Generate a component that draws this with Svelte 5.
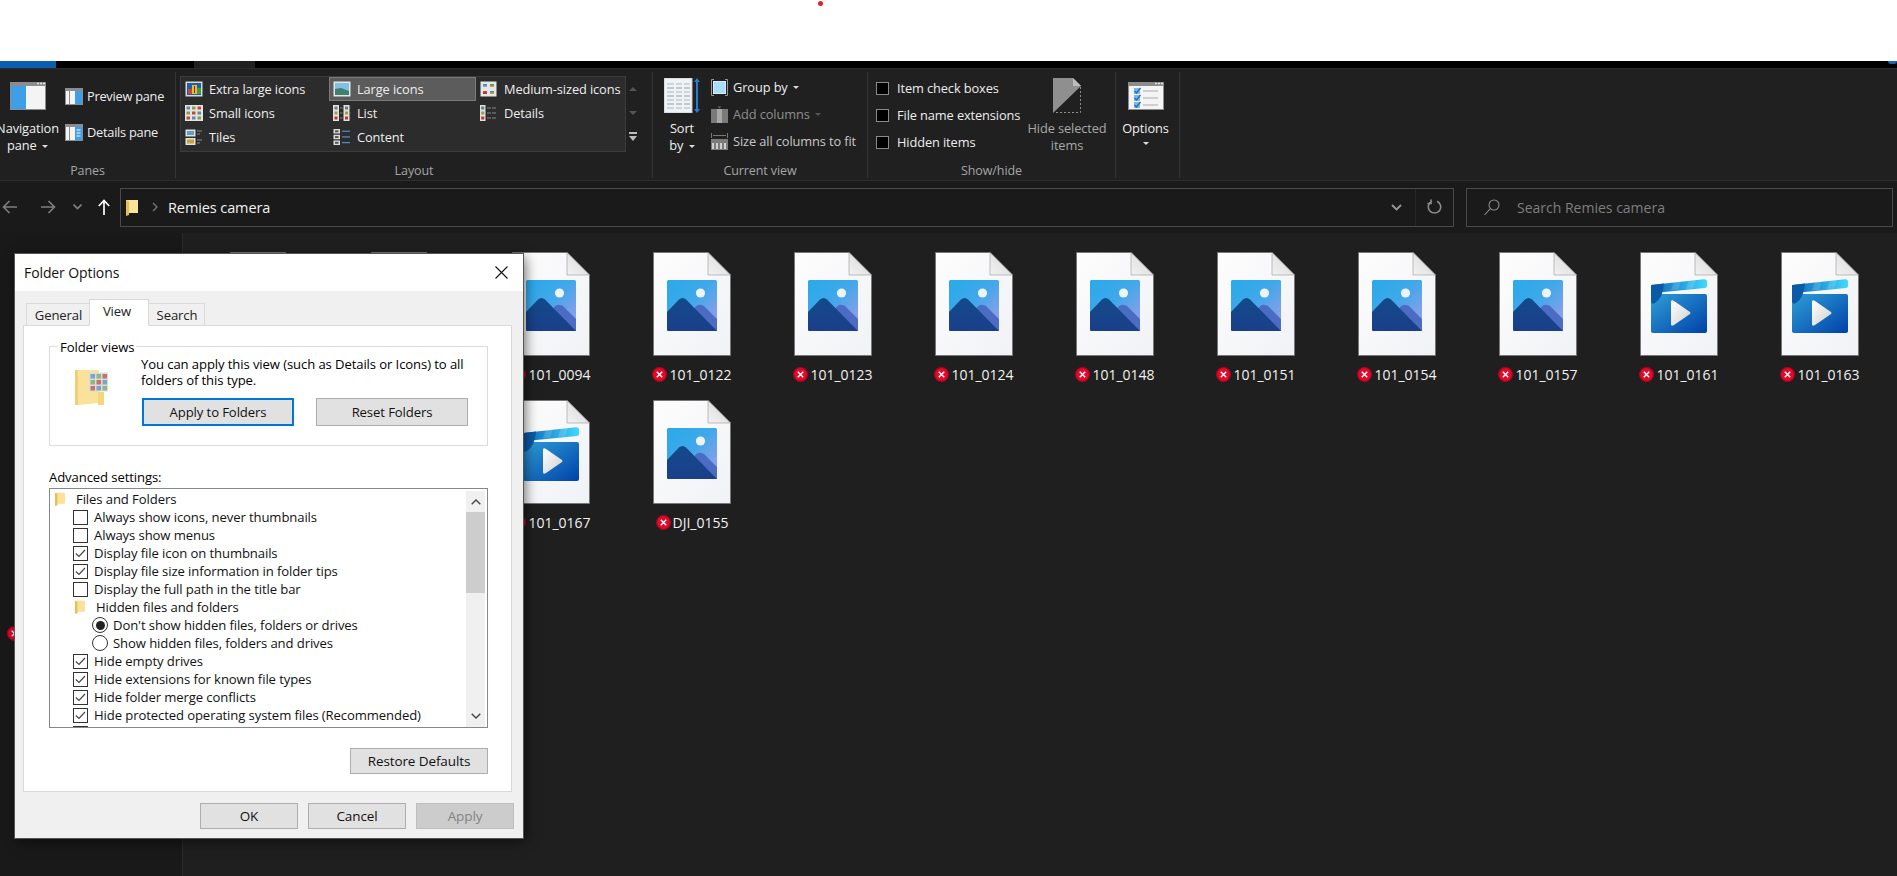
<script lang="ts">
	const layouts = [
		{ label: 'Extra large icons', icon: 'xl' },
		{ label: 'Large icons', icon: 'lg', active: true },
		{ label: 'Medium-sized icons', icon: 'md' },
		{ label: 'Small icons', icon: 'sm' },
		{ label: 'List', icon: 'list' },
		{ label: 'Details', icon: 'details' },
		{ label: 'Tiles', icon: 'tiles' },
		{ label: 'Content', icon: 'content' }
	];

	// the first cells of each row sit behind the dialog, only their top edge shows
	const files = [
		{ name: '', kind: 'image' },
		{ name: '', kind: 'image' },
		{ name: '101_0094', kind: 'image' },
		{ name: '101_0122', kind: 'image' },
		{ name: '101_0123', kind: 'image' },
		{ name: '101_0124', kind: 'image' },
		{ name: '101_0148', kind: 'image' },
		{ name: '101_0151', kind: 'image' },
		{ name: '101_0154', kind: 'image' },
		{ name: '101_0157', kind: 'image' },
		{ name: '101_0161', kind: 'video' },
		{ name: '101_0163', kind: 'video' },
		{ name: '', kind: 'video' },
		{ name: '', kind: 'video' },
		{ name: '101_0167', kind: 'video' },
		{ name: 'DJI_0155', kind: 'image' }
	];

	const settings = [
		{ type: 'folder', label: 'Files and Folders', level: 0 },
		{ type: 'check', label: 'Always show icons, never thumbnails' },
		{ type: 'check', label: 'Always show menus' },
		{ type: 'check', label: 'Display file icon on thumbnails', on: true },
		{ type: 'check', label: 'Display file size information in folder tips', on: true },
		{ type: 'check', label: 'Display the full path in the title bar' },
		{ type: 'folder', label: 'Hidden files and folders', level: 1 },
		{ type: 'radio', label: "Don't show hidden files, folders or drives", on: true },
		{ type: 'radio', label: 'Show hidden files, folders and drives' },
		{ type: 'check', label: 'Hide empty drives', on: true },
		{ type: 'check', label: 'Hide extensions for known file types', on: true },
		{ type: 'check', label: 'Hide folder merge conflicts', on: true },
		{ type: 'check', label: 'Hide protected operating system files (Recommended)', on: true },
		{ type: 'check', label: '', on: true }
	];
</script>

{#snippet tinyPhoto(x, y, w, h, a = '#3f87b5', b = '#c9a13b')}
	<rect {x} {y} width={w} height={h} fill="#e8e8e8" />
	<rect x={x + 1} y={y + 1} width={w - 2} height={h - 2} fill={a} />
	<rect x={x + 1} y={y + h / 2} width={w - 2} height={h / 2 - 1} fill={b} />
{/snippet}

{#snippet galleryIcon(name)}
	<svg class="gallery-icon" width="18" height="16" viewBox="0 0 18 16">
		{#if name === 'xl'}
			<rect x="0.5" y="0.5" width="17" height="15" fill="#d8d8d8" />
			<rect x="2" y="2" width="14" height="12" fill="#1e5fa8" />
			<rect x="3" y="8" width="4" height="5" fill="#c9453a" />
			<rect x="7" y="4" width="5" height="9" fill="#e8c021" />
			<rect x="9" y="5" width="1" height="7" fill="#7a2b10" />
			<rect x="12" y="7" width="4" height="6" fill="#3f9a4c" />
		{:else if name === 'lg'}
			<rect x="0.5" y="0.5" width="17" height="15" fill="#e6e6e6" />
			<rect x="2" y="2" width="14" height="12" fill="#7fc0e4" />
			<path d="M2 8 L8 7 L16 10 V14 H2Z" fill="#3f7f70" />
		{:else if name === 'md'}
			<rect x="0.5" y="0.5" width="16" height="15" fill="#e6e6e6" />
			{@render tinyPhoto(2, 2, 6, 5, '#4f86b8', '#7aa8c8')}
			{@render tinyPhoto(9, 2, 6, 5, '#4c9a58', '#c9a13b')}
			{@render tinyPhoto(2, 9, 6, 5, '#c9453a', '#b03a20')}
			{@render tinyPhoto(9, 9, 6, 5, '#4f86b8', '#c9a13b')}
		{:else if name === 'sm'}
			<rect x="0" y="0" width="18" height="16" fill="#e4e4e4" />
			{#each [1.5, 7, 12.5] as x, i}
				{#each [1.5, 6.5, 11.5] as y, j}
					<rect {x} {y} width="3.5" height="3" fill={['#5f8aa8', '#8a9a50', '#c24a30'][(i + j) % 3]} />
				{/each}
			{/each}
		{:else if name === 'list'}
			{#each [0, 10.5] as x}
				<rect {x} y="0" width="6" height="16" fill="#e2e2e2" />
				<rect x={x + 1.5} y="1.5" width="3" height="3" fill="#5f7f90" />
				<rect x={x + 1.5} y="6.5" width="3" height="3" fill="#a89a40" />
				<rect x={x + 1.5} y="11.5" width="3" height="3" fill="#b83a20" />
				<path d="M{x + 7} 3h2.5M{x + 7} 8h2.5M{x + 7} 13h2.5" stroke="#888" />
			{/each}
		{:else if name === 'details'}
			<rect x="0" y="0" width="5.5" height="16" fill="#e2e2e2" />
			<rect x="1.2" y="1.5" width="3" height="3" fill="#5f7f90" />
			<rect x="1.2" y="6.5" width="3" height="3" fill="#a89a40" />
			<rect x="1.2" y="11.5" width="3" height="3" fill="#b83a20" />
			<path d="M7 3h4M12 3h4M7 8h4M12 8h4M7 13h4M12 13h4" stroke="#888" />
		{:else if name === 'tiles'}
			<rect x="0.5" y="0.5" width="10" height="7" fill="#e2e2e2" />
			<rect x="2" y="2" width="7" height="4" fill="#5f9fc0" />
			<rect x="0.5" y="9" width="10" height="7" fill="#e2e2e2" />
			<rect x="2" y="10.5" width="7" height="4" fill="#c9a13b" />
			<path d="M12 2h5M12 5h3M12 11h5M12 14h3" stroke="#8a8a8a" />
		{:else}
			{#each [0, 5.75, 11.5] as y}
				<rect x="0.5" {y} width="6.5" height="4.5" fill="#dcdcdc" />
				<rect x="2" y={y + 1.3} width="3.5" height="2" fill="#555" />
				<path d="M9 {y + 2.2}h8" stroke="#5da3ea" />
			{/each}
		{/if}
	</svg>
{/snippet}

{#snippet folderIcon(w = 12, h = 17)}
	<svg width={w} height={h} viewBox="0 0 12 17">
		<path d="M0 1 H11 V14 H3 L0 16Z" fill="#f5d67e" />
		<path d="M0 1 L3 3 V16 L0 17Z" fill="#e9bd56" />
		<rect x="3" y="1" width="9" height="13" fill="#fbe29a" />
	</svg>
{/snippet}

{#snippet errorBadge()}
	<svg class="badge" width="15" height="15" viewBox="0 0 15 15">
		<circle cx="7.5" cy="7.5" r="7.5" fill="#b0051e" />
		<circle cx="7.5" cy="7.5" r="6.2" fill="#e3092a" />
		<path d="M4.8 4.8L10.2 10.2M10.2 4.8L4.8 10.2" stroke="#fff" stroke-width="1.5" />
	</svg>
{/snippet}

{#snippet imageArt()}
	<g transform="translate(14 28)">
		<rect width="50" height="51" rx="1.5" fill="url(#tile)" />
		<circle cx="33.5" cy="13" r="4.6" fill="#eef3fa" />
		<path d="M27 29 Q30 24 34 25 Q37 25 39 28 L50 39 V51 H34Z" fill="#4c6cc4" />
		<path d="M0 32 L12 19.5 Q15.5 16.5 19 19.5 L50 51 H1.5 Q0 51 0 49.5Z" fill="url(#peak)" />
	</g>
{/snippet}

{#snippet videoArt()}
	<path d="M11 44 Q11 42 13 42 H65 Q67 42 67 44 V79 Q67 81 65 81 H13 Q11 81 11 79Z" fill="url(#clip)" />
	<path d="M11 33 L64 27.3 Q67 27 67 30 V34 Q67 36 65 36 L24 40 L11 41Z" fill="url(#strip)" />
	<path d="M34 29.5L41 28.7L38 37.8L31 38.5ZM49 27.9L56 27.2L53 36.4L46 37Z" fill="#fff" opacity=".14" />
	<path d="M11 33.5 Q11 33 12 33 L24 31.6 Q23 46 15 51 Q11 53 11 49Z" fill="#0a5aa8" />
	<path d="M31 50 Q31 47 34 49 L50 60 Q51 61 50 62 L34 73 Q31 75 31 72Z" fill="url(#play)" />
{/snippet}

<div class="explorer">
	<svg class="defs" width="0" height="0">
		<defs>
			<linearGradient id="page" x1="0" y1="0" x2="1" y2="1">
				<stop offset="0" stop-color="#fdfdfd" />
				<stop offset="1" stop-color="#f1f2f6" />
			</linearGradient>
			<linearGradient id="fold" x1="0" y1="1" x2="1" y2="0">
				<stop offset="0" stop-color="#f2f2f2" />
				<stop offset="1" stop-color="#d6d6d6" />
			</linearGradient>
			<linearGradient id="tile" x1="0" y1="0" x2="1" y2="1">
				<stop offset="0" stop-color="#29aae9" />
				<stop offset="0.45" stop-color="#3fa8ea" />
				<stop offset="1" stop-color="#a79ce8" />
			</linearGradient>
			<linearGradient id="peak" x1="0" y1="0" x2="0" y2="1">
				<stop offset="0" stop-color="#124a8a" />
				<stop offset="1" stop-color="#1b3f8a" />
			</linearGradient>
			<linearGradient id="strip" x1="0" y1="0" x2="1" y2="0">
				<stop offset="0" stop-color="#0b62b4" />
				<stop offset="1" stop-color="#41d8ff" />
			</linearGradient>
			<linearGradient id="clip" x1="0" y1="0" x2="1" y2="1">
				<stop offset="0" stop-color="#2f9fd8" />
				<stop offset="1" stop-color="#0041a8" />
			</linearGradient>
			<linearGradient id="play" x1="0" y1="0" x2="1" y2="1">
				<stop offset="0" stop-color="#ffffff" />
				<stop offset="1" stop-color="#cfcfcf" />
			</linearGradient>
		</defs>
	</svg>

	<div class="topbar"><span class="red-dot"></span></div>

	<div class="tabstrip">
		<span class="tab-file"></span>
		<span class="tab-view"></span>
		<span class="corner-dot"></span>
	</div>

	<div class="ribbon">
		<section class="group panes">
			<div class="group-body">
				<div class="big-btn nav-btn">
					<svg width="36" height="28" viewBox="0 0 36 28">
						<rect width="36" height="28" fill="#8c8c8c" />
						<rect x="1" y="4" width="34" height="23" fill="#f4f4f4" />
						<rect x="1" y="4" width="15" height="23" fill="#3f9ee8" />
						<path d="M27 1.5h2M30 1.5h2M33 1.5h2" stroke="#ddd" stroke-width="1.5" />
					</svg>
					<span>Navigation</span>
					<span>pane <i class="caret"></i></span>
				</div>
				<div class="pane-rows">
					<div class="pane-row">
						<svg width="18" height="17" viewBox="0 0 18 17">
							<rect width="18" height="17" fill="#8c8c8c" />
							<rect x="1" y="3" width="16" height="13" fill="#f4f4f4" />
							<rect x="4" y="3" width="1" height="13" fill="#8c8c8c" />
							<rect x="10" y="3" width="7" height="13" fill="#3f9ee8" />
						</svg>
						<span>Preview pane</span>
					</div>
					<div class="pane-row">
						<svg width="18" height="17" viewBox="0 0 18 17">
							<rect width="18" height="17" fill="#8c8c8c" />
							<rect x="1" y="3" width="16" height="13" fill="#f4f4f4" />
							<rect x="4" y="3" width="1" height="13" fill="#8c8c8c" />
							<rect x="10" y="3" width="7" height="13" fill="#3f9ee8" />
							<path d="M11.5 6h4M11.5 9h4M11.5 12h4" stroke="#fff" />
						</svg>
						<span>Details pane</span>
					</div>
				</div>
			</div>
			<div class="group-label">Panes</div>
		</section>

		<section class="group layout">
			<div class="group-body">
				<div class="gallery">
					{#each layouts as item}
						<div class="gallery-item" class:active={item.active}>
							{@render galleryIcon(item.icon)}
							<span>{item.label}</span>
						</div>
					{/each}
				</div>
				<div class="gallery-scroll">
					<i class="up"></i>
					<i class="down"></i>
					<i class="more"></i>
				</div>
			</div>
			<div class="group-label">Layout</div>
		</section>

		<section class="group current">
			<div class="group-body">
				<div class="big-btn sort-btn">
					<svg width="36" height="35" viewBox="0 0 36 35">
						<rect x="0" y="0" width="28" height="35" fill="#f0f3f6" stroke="#c8c8c8" />
						{#each [6, 10, 14, 18, 22, 26, 30] as y}
							<path d="M3 {y}h7M12 {y}h6M20 {y}h6" stroke={y % 8 === 6 ? '#b8cfe0' : '#b9b9b9'} stroke-width="1.4" />
						{/each}
						<path d="M33 3V32" stroke="#1f7fd0" stroke-width="2" />
						<path d="M30 4 L33 0 L36 4Z M30 31 L33 35 L36 31Z" fill="#1f7fd0" />
					</svg>
					<span>Sort</span>
					<span>by <i class="caret"></i></span>
				</div>
				<div class="view-rows">
					<div class="view-row">
						<svg width="17" height="17" viewBox="0 0 17 17">
							<path d="M3 .5H.5V16.5H3M14 .5H16.5V16.5H14" fill="none" stroke="#999" />
							<rect x="2.5" y="2.5" width="12" height="12" fill="#a9dcfb" stroke="#dcecf7" />
						</svg>
						<span>Group by</span>
						<i class="caret"></i>
					</div>
					<div class="view-row muted">
						<svg width="17" height="17" viewBox="0 0 17 17">
							<rect y="3" width="17" height="14" fill="#7a7a7a" />
							<rect x="6" y="3" width="5" height="14" fill="#a8a8a8" />
							<path d="M6.5 .5h4L8.5 2.5Z" fill="#666" />
						</svg>
						<span>Add columns</span>
						<i class="caret dim"></i>
					</div>
					<div class="view-row">
						<svg width="17" height="17" viewBox="0 0 17 17">
							<path d="M.5 0V5M16.5 0V5M2 2.5H15" stroke="#777" fill="none" />
							<rect y="6" width="17" height="11" fill="#7c7c7c" />
							<path d="M2 10V16M6 10V16M10 10V16M14 10V16" stroke="#cfcfcf" stroke-width="2" />
						</svg>
						<span class="soft">Size all columns to fit</span>
					</div>
				</div>
			</div>
			<div class="group-label">Current view</div>
		</section>

		<section class="group showhide">
			<div class="group-body">
				<div class="toggles">
					<label class="toggle"><input type="checkbox" /><span>Item check boxes</span></label>
					<label class="toggle"><input type="checkbox" /><span>File name extensions</span></label>
					<label class="toggle"><input type="checkbox" /><span>Hidden items</span></label>
				</div>
				<div class="big-btn hide-btn">
					<svg width="28" height="35" viewBox="0 0 28 35">
						<path d="M0 0 H20 L28 8 V35 H0Z" fill="#8f8f8f" />
						<path d="M20 0 V8 H28Z" fill="#bdbdbd" />
						<path d="M28 8 V35 H0Z" fill="#202020" />
						<path d="M27.5 9 V34.5 H1" fill="none" stroke="#8f8f8f" stroke-dasharray="2 2" />
					</svg>
					<span>Hide selected</span>
					<span>items</span>
				</div>
			</div>
			<div class="group-label">Show/hide</div>
		</section>

		<section class="group options">
			<div class="group-body">
				<div class="big-btn opt-btn">
					<svg width="36" height="28" viewBox="0 0 36 28">
						<rect width="36" height="28" fill="#8c8c8c" />
						<rect x="1" y="4" width="34" height="23" fill="#f4f4f4" />
						<path d="M27 1.5h2M30 1.5h2M33 1.5h2" stroke="#ddd" stroke-width="1.5" />
						{#each [9, 16, 23] as y}
							<rect x="6" y={y - 3} width="6" height="6" fill="#7fb8e8" />
							<path d="M6.5 {y}l2 2l4 -5" fill="none" stroke="#1f6fc0" stroke-width="1.4" />
							<path d="M15 {y}H30" stroke="#aaa" />
						{/each}
					</svg>
					<span>Options</span>
					<i class="caret"></i>
				</div>
			</div>
			<div class="group-label"></div>
		</section>
	</div>

	<div class="addressbar">
		<div class="nav-arrows">
			<svg width="15" height="14" viewBox="0 0 15 14"><path d="M15 7H1.5M7.5 1L1.5 7L7.5 13" fill="none" stroke="#808080" stroke-width="1.6" /></svg>
			<svg width="15" height="14" viewBox="0 0 15 14"><path d="M0 7H13.5M7.5 1L13.5 7L7.5 13" fill="none" stroke="#808080" stroke-width="1.6" /></svg>
			<svg width="9" height="6" viewBox="0 0 9 6"><path d="M.5 .5L4.5 4.5L8.5 .5" fill="none" stroke="#808080" stroke-width="1.6" /></svg>
			<svg width="12" height="16" viewBox="0 0 12 16"><path d="M6 16V2M.8 7L6 1.5L11.2 7" fill="none" stroke="#fff" stroke-width="1.7" /></svg>
		</div>
		<div class="path-box">
			{@render folderIcon(12, 17)}
			<svg class="crumb" width="6" height="10" viewBox="0 0 6 10"><path d="M1 1L5 5L1 9" fill="none" stroke="#777" stroke-width="1.3" /></svg>
			<span class="path-text">Remies camera</span>
			<svg class="path-chevron" width="11" height="7" viewBox="0 0 11 7"><path d="M1 1L5.5 5.5L10 1" fill="none" stroke="#999" stroke-width="1.8" /></svg>
			<span class="path-refresh">
				<svg width="15" height="17" viewBox="0 0 15 17"><path d="M5 2.2A6.2 6.2 0 1 0 10 2.2M4 .5V4.5H.5" fill="none" stroke="#8a8a8a" stroke-width="1.6" /></svg>
			</span>
		</div>
		<div class="search-box">
			<svg width="16" height="17" viewBox="0 0 16 17"><circle cx="10" cy="6" r="5" fill="none" stroke="#8a8a8a" stroke-width="1.1" /><path d="M6.3 9.7L.5 16" stroke="#8a8a8a" stroke-width="1.1" /></svg>
			<span>Search Remies camera</span>
		</div>
	</div>

	<div class="main">
		<aside class="navpane"><span class="nav-error">{@render errorBadge()}</span></aside>
		<div class="files">
			{#each files as file}
				<div class="file">
					<svg width="78" height="104" viewBox="0 0 78 104">
						<path d="M.5 .5H55L77.5 23V103.5H.5Z" fill="url(#page)" stroke="#777" />
						<path d="M55 .5V23H77.5Z" fill="url(#fold)" stroke="#999" stroke-width=".6" />
						{#if file.kind === 'image'}
							{@render imageArt()}
						{:else}
							{@render videoArt()}
						{/if}
					</svg>
					{#if file.name}
						<div class="file-label">
							{@render errorBadge()}
							<span>{file.name}</span>
						</div>
					{/if}
				</div>
			{/each}
		</div>
	</div>

	<div class="dialog">
		<header class="dialog-title">
			<span>Folder Options</span>
			<svg width="13" height="13" viewBox="0 0 13 13"><path d="M.5 .5L12.5 12.5M12.5 .5L.5 12.5" stroke="#111" stroke-width="1.1" /></svg>
		</header>
		<div class="dialog-body">
			<div class="tabs">
				<span class="tab general">General</span>
				<span class="tab selected">View</span>
				<span class="tab search">Search</span>
			</div>
			<div class="panel">
				<fieldset class="folder-views">
					<legend>Folder views</legend>
					<svg class="views-icon" width="34" height="36" viewBox="0 0 34 36">
						<path d="M0 1H24V34L4 36H0Z" fill="#fbe29a" />
						<path d="M0 1H3V36H0Z" fill="#f2cf74" />
						<rect x="14" y="3.5" width="19" height="19" fill="#d6dce1" />
						<g opacity=".72">
							{#each [5, 11, 17] as y, j}
								{#each [15.5, 21.5, 27.5] as x, i}
									<rect {x} {y} width="4.5" height="4.5" fill={['#5a8fb8', '#7aa85a', '#c84a30'][(i + j) % 3]} />
								{/each}
							{/each}
						</g>
						<path d="M23 23V36H29V23Z" fill="#f5d67e" />
					</svg>
					<div class="views-side">
						<p>You can apply this view (such as Details or Icons) to all<br />folders of this type.</p>
						<div class="views-actions">
							<button class="win-btn focused">Apply to Folders</button>
							<button class="win-btn">Reset Folders</button>
						</div>
					</div>
				</fieldset>

				<div class="advanced-label">Advanced settings:</div>
				<div class="advanced">
					<div class="advanced-list">
						{#each settings as row}
							<div class="setting {row.type}" class:nested={row.level === 1}>
								{#if row.type === 'folder'}
									<span class="setting-folder">{@render folderIcon(10, 14)}</span>
								{:else if row.type === 'check'}
									<span class="check-box">
										{#if row.on}
											<svg width="11" height="9" viewBox="0 0 11 9"><path d="M.8 4.5L4 7.5L10 1" fill="none" stroke="#444" stroke-width="1.2" /></svg>
										{/if}
									</span>
								{:else}
									<span class="radio-dot" class:on={row.on}></span>
								{/if}
								<span class="setting-text">{row.label}</span>
							</div>
						{/each}
					</div>
					<div class="advanced-scroll">
						<svg width="10" height="6" viewBox="0 0 10 6"><path d="M.7 5.3L5 1L9.3 5.3" fill="none" stroke="#444" stroke-width="1.4" /></svg>
						<span class="thumb"></span>
						<svg class="scroll-down" width="10" height="6" viewBox="0 0 10 6"><path d="M.7 .7L5 5L9.3 .7" fill="none" stroke="#444" stroke-width="1.4" /></svg>
					</div>
				</div>
				<div class="restore-row"><button class="win-btn restore">Restore Defaults</button></div>
			</div>
			<div class="dialog-actions">
				<button class="win-btn action">OK</button>
				<button class="win-btn action">Cancel</button>
				<button class="win-btn action" disabled>Apply</button>
			</div>
		</div>
	</div>
</div>

<style>
	:global(body) { background: #1f1f1f; overflow: hidden; }
	.explorer { position: relative; width: 1897px; height: 876px; display: flex; flex-direction: column; overflow: hidden; font-family: "Open Sans", "Liberation Sans", sans-serif; color: #eee; }
	.defs { position: absolute; }

	.topbar { position: relative; height: 61px; background: #fff; flex: none; }
	.red-dot { position: absolute; left: 818px; top: 1px; width: 5px; height: 5px; border-radius: 50%; background: #e0202a; }

	.tabstrip { position: relative; height: 7px; background: #000; flex: none; display: flex; }
	.tab-file { width: 56px; background: #0a5fb0; }
	.tab-view { margin-left: 138px; width: 61px; background: #202020; }
	.corner-dot { position: absolute; right: 0; top: 0; width: 9px; height: 3px; border-radius: 0 0 6px 6px; background: #1468b8; }

	.ribbon { height: 113px; flex: none; display: flex; padding-top: 4px; box-sizing: border-box; background: #202020; border-top: 1px solid #2c2c2c; border-bottom: 1px solid #2e2e2e; font-size: 12.8px; letter-spacing: -0.1px; line-height: 17px; }
	.group { display: flex; flex-direction: column; box-sizing: border-box; height: 106px; border-right: 1px solid #353535; flex: none; margin-top: -1px; }
	.group-body { flex: 1; display: flex; min-height: 0; }
	.group-label { height: 16px; flex: none; text-align: center; color: #a6a6a6; font-size: 12.5px; }
	.panes { width: 176px; }
	.layout { width: 477px; }
	.current { width: 215px; }
	.showhide { width: 248px; }
	.options { width: 64px; }

	.big-btn { display: flex; flex-direction: column; align-items: center; white-space: nowrap; flex: none; color: #f0f0f0; }
	.big-btn svg { margin-bottom: 10px; }
	.nav-btn { width: 55px; padding-top: 10px; }
	.caret { display: inline-block; width: 0; height: 0; margin-left: 2px; vertical-align: middle; border: 3.5px solid transparent; border-top-color: #ddd; border-bottom: 0; }
	.caret.dim { border-top-color: #555; }

	.pane-rows { margin: 6px 0 0 10px; letter-spacing: -0.25px; }
	.pane-row { display: flex; align-items: center; gap: 4px; height: 36px; white-space: nowrap; }

	.gallery { width: 444px; height: 74px; margin: 5px 0 0 5px; display: grid; grid-template-columns: 148px 147px 1fr; grid-auto-rows: 24px; box-sizing: border-box; background: #2c2c2c; outline: 1px solid #3c3c3c; }
	.gallery-item { display: flex; align-items: center; gap: 6px; padding-left: 4px; white-space: nowrap; box-sizing: border-box; }
	.gallery-item.active { background: #5c5c5c; outline: 1px solid #7b7b7b; outline-offset: -1px; }
	.gallery-icon { flex: none; }
	.gallery-scroll { display: flex; flex-direction: column; margin: 5px 0 0 3px; width: 10px; align-items: center; }
	.gallery-scroll i { height: 24px; display: flex; align-items: center; justify-content: center; position: relative; width: 10px; }
	.gallery-scroll i::before { content: ""; border: 4px solid transparent; }
	.gallery-scroll .up::before { border-bottom: 4px solid #555; border-top: 0; }
	.gallery-scroll .down::before { border-top: 4px solid #555; border-bottom: 0; }
	.gallery-scroll .more::before { border-top: 5px solid #bbb; border-bottom: 0; margin-top: 3px; }
	.gallery-scroll .more::after { content: ""; position: absolute; left: 1px; top: 7px; width: 8px; height: 2px; background: #bbb; }

	.sort-btn { width: 36px; padding-top: 6px; margin-left: 11px; }
	.sort-btn svg { margin-bottom: 7px; }
	.view-rows { margin: 2px 0 0 11px; }
	.view-row { display: flex; align-items: center; gap: 5px; height: 27px; white-space: nowrap; }
	.view-row .caret { margin-left: 0; }
	.view-row.muted { color: #8f8f8f; }
	.soft { color: #c8c8c8; }

	.toggles { margin: 3px 0 0 8px; width: 186px; flex: none; }
	.toggle { display: flex; align-items: center; gap: 8px; height: 27px; white-space: nowrap; }
	.toggle input { appearance: none; margin: 0; width: 13px; height: 13px; background: #000; border: 1px solid #8a8a8a; box-sizing: border-box; }
	.hide-btn { width: 0; margin-left: 0; padding-top: 6px; color: #a8a8a8; transform: translateX(5px); }
	.hide-btn svg { margin-bottom: 7px; }
	.opt-btn { width: 59px; margin-left: 0; padding-top: 10px; }
	.opt-btn .caret { margin-top: 5px; margin-left: 0; }

	.addressbar { height: 52px; flex: none; box-sizing: border-box; background: #1a1a1a; display: flex; align-items: center; padding-right: 4px; }
	.nav-arrows { width: 120px; flex: none; position: relative; height: 20px; display: flex; align-items: center; padding-left: 2px; box-sizing: border-box; }
	.nav-arrows svg:nth-child(2) { margin-left: 24px; }
	.nav-arrows svg:nth-child(3) { margin-left: 17px; }
	.nav-arrows svg:nth-child(4) { margin-left: 16px; }
	.path-box { flex: none; width: 1334px; height: 39px; box-sizing: border-box; border: 1px solid #4a4a4a; display: flex; align-items: center; padding-left: 5px; font-size: 14.5px; letter-spacing: -0.1px; }
	.crumb { margin-left: 14px; }
	.path-text { margin-left: 10px; flex: 1; color: #f2f2f2; }
	.path-chevron { margin-right: 13px; }
	.path-refresh { width: 38px; height: 100%; border-left: 1px solid #262626; display: flex; align-items: center; justify-content: center; box-sizing: border-box; }
	.search-box { flex: 1; margin-left: 12px; height: 39px; box-sizing: border-box; border: 1px solid #4a4a4a; display: flex; align-items: center; gap: 17px; padding-left: 17px; color: #7e7e7e; font-size: 14px; letter-spacing: 0; }

	.main { flex: 1; display: flex; min-height: 0; }
	.navpane { position: relative; width: 183px; flex: none; background: #191919; border-right: 1px solid #2a2a2a; box-sizing: border-box; }
	.nav-error { position: absolute; left: 7px; top: 393px; display: flex; }
	.files { flex: 1; padding: 19px 0 0 15.5px; display: grid; grid-template-columns: repeat(12, 141px); grid-auto-rows: 148px; background: #1f1f1f; }
	.file { display: flex; flex-direction: column; align-items: center; }
	.file-label { display: flex; align-items: center; gap: 2px; height: 20px; margin-top: 8px; font-size: 14px; letter-spacing: 0; color: #f2f2f2; }
	.badge { flex: none; }

	.dialog { position: absolute; left: 15px; top: 254px; width: 508px; height: 584px; display: flex; flex-direction: column; background: #f0f0f0; box-shadow: 0 0 0 1px #555, 2px 3px 12px rgba(0, 0, 0, 0.6); color: #000; font-size: 13.1px; letter-spacing: -0.1px; }
	.dialog-title { height: 37px; flex: none; background: #fff; display: flex; align-items: center; justify-content: space-between; padding: 0 15px 0 9px; font-size: 14px; color: #111; }
	.dialog-body { flex: 1; display: flex; flex-direction: column; padding: 0 11px 0 8px; min-height: 0; }
	.tabs { display: flex; align-items: flex-end; height: 35px; padding-left: 3px; flex: none; margin-bottom: -1px; position: relative; z-index: 1; }
	.tab { height: 23px; box-sizing: border-box; line-height: 23px; width: 64px; padding-left: 1px; text-align: center; border: 1px solid #d9d9d9; background: #f0f0f0; color: #222; margin-right: -1px; }
	.tab.selected { height: 27px; width: 60px; padding: 0 4px 0 0; line-height: 23px; background: #fff; border-bottom-color: #fff; z-index: 1; }
	.tab.search { width: 57px; }
	.panel { height: 467px; flex: none; box-sizing: border-box; background: #fff; border: 1px solid #d9d9d9; padding: 20px 23px 0 25px; }

	.folder-views { margin: 0; height: 100px; box-sizing: border-box; border: 1px solid #dcdcdc; padding: 0 0 0 25px; display: flex; position: relative; }
	legend { position: absolute; left: 8px; top: -9px; padding: 0 2px; background: #fff; line-height: 18px; }
	.views-icon { margin-top: 22px; flex: none; }
	.views-side { margin-left: 32px; padding-top: 9px; }
	.views-side p { margin: 0; line-height: 16px; white-space: nowrap; }
	.views-actions { display: flex; gap: 22px; margin-top: 10px; margin-left: 1px; }

	.win-btn { font: inherit; letter-spacing: inherit; height: 28px; width: 152px; padding: 0; background: #e1e1e1; color: #111; border: 1px solid #adadad; }
	.win-btn.focused { border: 2px solid #0078d7; }
	.restore { width: 138px; height: 26px; font-size: 13.5px; }
	.action { width: 98px; height: 26px; font-size: 13.5px; }
	.win-btn:disabled { background: #ccc; border-color: #bfbfbf; color: #838383; }

	.advanced-label { margin-top: 22px; line-height: 18px; height: 20px; }
	.advanced { height: 240px; box-sizing: border-box; border: 1px solid #828790; display: flex; overflow: hidden; }
	.advanced-list { flex: 1; padding: 1px 0 0 5px; }
	.setting { display: flex; align-items: center; height: 18px; white-space: nowrap; color: #111; }
	.setting.folder { gap: 0; }
	.setting-folder { width: 18px; display: flex; padding-left: 0; margin-right: 3px; box-sizing: border-box; }
	.setting.check { padding-left: 18px; gap: 6px; }
	.setting.folder.nested { padding-left: 20px; }
	.setting.radio { padding-left: 37px; gap: 5px; }
	.check-box { width: 15px; height: 15px; box-sizing: border-box; border: 1px solid #333; display: flex; align-items: center; justify-content: center; flex: none; }
	.radio-dot { width: 16px; height: 16px; box-sizing: border-box; border: 1px solid #333; border-radius: 50%; flex: none; position: relative; }
	.radio-dot.on::after { content: ""; position: absolute; inset: 2.5px; border-radius: 50%; background: #222; }
	.advanced-scroll { width: 19px; margin: 2px 2px 0 0; background: #f0f0f0; display: flex; flex-direction: column; align-items: center; flex: none; }
	.advanced-scroll svg { margin-top: 8px; flex: none; }
	.thumb { width: 100%; height: 81px; background: #cdcdcd; margin-top: 7px; }
	.advanced-scroll .scroll-down { margin-top: auto; margin-bottom: 8px; }
	.restore-row { display: flex; justify-content: flex-end; margin-top: 20px; padding-right: 0; }

	.dialog-actions { display: flex; justify-content: flex-end; gap: 10px; margin-top: 11px; margin-right: -2px; }
</style>
